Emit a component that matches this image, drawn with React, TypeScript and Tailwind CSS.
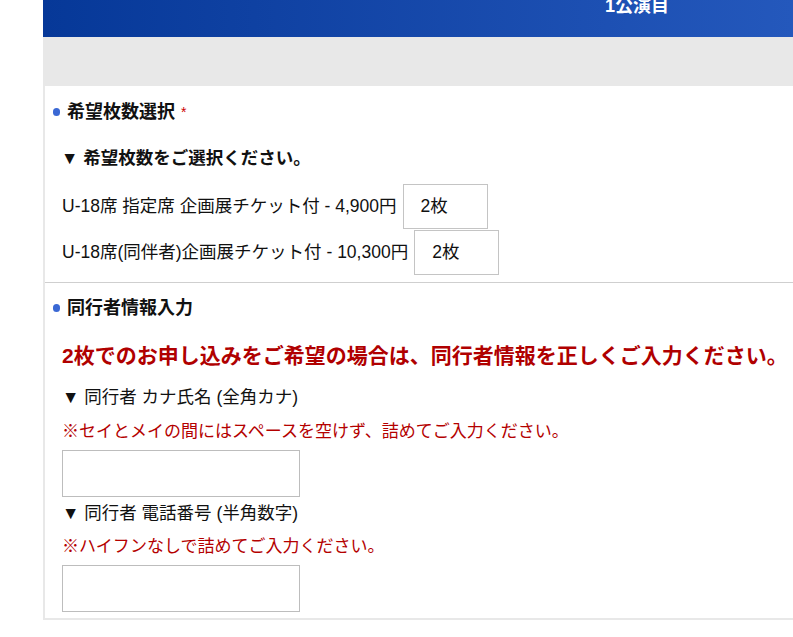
import React from "react";

const font = { fontFamily: '"Liberation Sans", "Noto Sans CJK JP", sans-serif' };

function SectionTitle({ label, required }: { label: string; required?: boolean }) {
  return (
    <div className="flex items-center h-[26px] pl-[8px] gap-[7px]">
      <span className="w-[7px] h-[8px] rounded-full bg-[#3a68d4]" />
      <span className="text-[18px] font-bold text-[#111]">{label}</span>
      {required ? <span className="text-[14px] text-[#c00] self-start mt-[3px] -ml-[1px]">*</span> : null}
    </div>
  );
}

function QtyRow({ label }: { label: string }) {
  return (
    <div className="flex items-center gap-[6px]">
      <span className="text-[17.5px] text-[#111]">{label}</span>
      <div className="w-[85px] h-[45px] border border-[#c4c4c4] flex items-center pl-[17px] text-[17.5px] text-[#111]">
        2枚
      </div>
    </div>
  );
}

function TextField() {
  return <input type="text" className="block w-[238px] h-[47px] border border-[#bdbdbd] bg-white outline-none" />;
}

export default function App() {
  return (
    <div className="w-full h-[637px] overflow-hidden bg-white pl-[43px]" style={font}>
      <div className="h-[37px] bg-linear-to-r from-[#063898] to-[#2458bc] overflow-hidden pl-[562px]">
        <div className="-mt-[5px] leading-[22px] text-[18px] font-bold text-white">1公演目</div>
      </div>
      <div className="h-[49px] bg-[#e8e8e8]" />
      <div className="border-l-2 border-b-2 border-[#e8e8e8]">
        <div className="pt-[13px] pb-[7px]">
          <SectionTitle label="希望枚数選択" required />
          <div className="mt-[20px] pl-[16px] h-[26px] flex items-center text-[17.5px] font-bold text-[#111]">
            ▼ 希望枚数をご選択ください。
          </div>
          <div className="mt-[13px] pl-[17px] flex flex-col gap-[1px]">
            <QtyRow label="U-18席 指定席 企画展チケット付 - 4,900円" />
            <QtyRow label="U-18席(同伴者)企画展チケット付 - 10,300円" />
          </div>
        </div>
        <div className="border-t border-[#cfcfcf] pt-[12px] pb-[6px]">
          <SectionTitle label="同行者情報入力" />
          <div className="pl-[17px]">
            <div className="mt-[20px] h-[30px] flex items-center text-[21px] font-bold text-[#b00000] whitespace-nowrap">
              2枚でのお申し込みをご希望の場合は、同行者情報を正しくご入力ください。
            </div>
            <div className="mt-[13px] h-[26px] flex items-center text-[17.5px] text-[#111]">▼ 同行者 カナ氏名 (全角カナ)</div>
            <div className="mt-[9px] h-[26px] flex items-center text-[17px] text-[#b40000]">
              ※セイとメイの間にはスペースを空けず、詰めてご入力ください。
            </div>
            <div className="mt-[5px]">
              <TextField />
            </div>
            <div className="mt-[3px] h-[26px] flex items-center text-[17.5px] text-[#111]">▼ 同行者 電話番号 (半角数字)</div>
            <div className="mt-[8px] h-[26px] flex items-center text-[17px] text-[#b40000]">
              ※ハイフンなしで詰めてご入力ください。
            </div>
            <div className="mt-[5px]">
              <TextField />
            </div>
          </div>
        </div>
      </div>
    </div>
  );
}
